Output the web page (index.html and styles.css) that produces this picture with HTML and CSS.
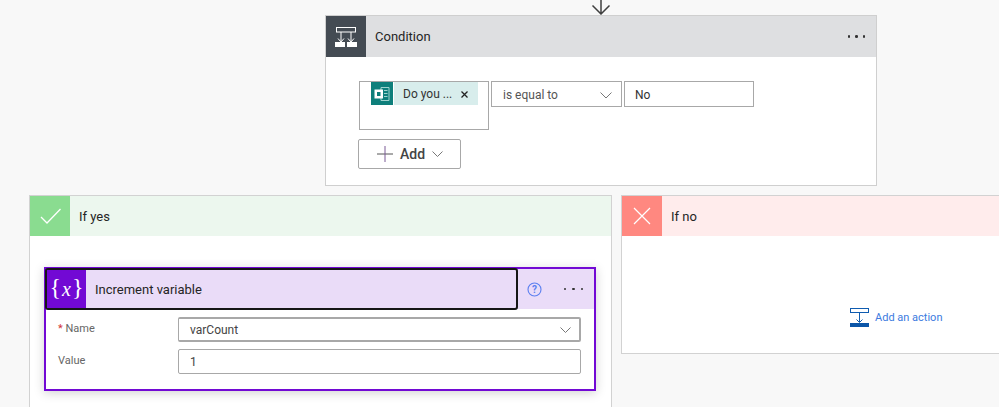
FILE: index.html
```html
<!DOCTYPE html>
<html lang="en">
<head>
<meta charset="utf-8">
<title>Condition</title>
<link rel="stylesheet" href="styles.css">
</head>
<body>
<svg class="flow-arrow" width="20" height="15" viewBox="0 0 20 15"><path d="M10 0V14M1.500 5.500L10 14L18.500 5.500" fill="none" stroke="#3f3f3f" stroke-width="1.500"/></svg>
<section class="condition">
  <header class="head head-grey">
    <div class="tile tile-dark">
      <svg width="22" height="22" viewBox="0 0 22 22"><g fill="none" stroke="#fff" stroke-width="1"><rect x="1.500" y="1.500" width="19" height="4.500"/><path d="M6 6V15M16 6V15"/></g><path d="M0 16h10v5H0zM12 16h10v5H12z" fill="#fff"/><path d="M3 12.500l3 3.500 3-3.500M13 12.500l3 3.500 3-3.500" fill="none" stroke="#fff" stroke-width="1"/></svg>
    </div>
    <span class="title title-condition">Condition</span>
    <span class="dots"><i></i><i></i><i></i></span>
  </header>
  <div class="cond-body">
    <div class="cond-row">
      <div class="token-box">
        <div class="chip">
          <span class="chip-icon">
            <svg width="18" height="18" viewBox="0 0 18 18"><path d="M8 2.500h8v13H8z" fill="none" stroke="#9fd3ce" stroke-width="1"/><path d="M11 5.500h3.500M11 8.500h3.500M11 11.500h3.500" stroke="#9fd3ce" stroke-width="1"/><rect x="1.500" y="4.500" width="8.500" height="9" fill="#fff"/><rect x="4" y="7" width="3.500" height="4" fill="#0e7f7b"/></svg>
          </span>
          <span class="chip-text">Do you ...</span>
          <svg class="chip-x" width="7" height="7" viewBox="0 0 7 7"><path d="M.5.500l6 6M6.500.500l-6 6" stroke="#222" stroke-width="1.300"/></svg>
        </div>
      </div>
      <div class="field field-select"><span>is equal to</span>
        <svg width="12" height="7" viewBox="0 0 12 7"><path d="M.5.500L6 6 11.500.500" fill="none" stroke="#777" stroke-width="1"/></svg>
      </div>
      <div class="field field-value"><span>No</span></div>
    </div>
    <button class="add-btn" type="button">
      <svg width="16" height="16" viewBox="0 0 16 16"><path d="M0 8h16" stroke="#555" stroke-width="1"/><path d="M8 0v16" stroke="#7a5a96" stroke-width="1"/></svg>
      <span>Add</span>
      <svg width="11" height="6" viewBox="0 0 11 6"><path d="M.5.500L5.500 5.500 10.500.500" fill="none" stroke="#777" stroke-width="1"/></svg>
    </button>
  </div>
</section>
<div class="branches">
  <section class="branch branch-yes">
    <header class="head head-yes">
      <div class="tile tile-yes">
        <svg width="22" height="18" viewBox="0 0 22 18"><path d="M2 10L8 16 21.500 2" fill="none" stroke="#fff" stroke-width="1.300"/></svg>
      </div>
      <span class="title title-branch">If yes</span>
    </header>
    <article class="action">
      <header class="action-head">
        <div class="action-focus">
          <div class="tile-var"><span class="brace">{</span><span class="var-x">x</span><span class="brace">}</span></div>
          <span class="title title-action">Increment variable</span>
        </div>
        <div class="action-tools">
          <svg width="15" height="15" viewBox="0 0 15 15"><circle cx="7.500" cy="7.500" r="6.500" fill="none" stroke="#5b7ff0" stroke-width="1.100"/><text x="7.500" y="11" text-anchor="middle" class="help-q">?</text></svg>
          <span class="dots dots-action"><i></i><i></i><i></i></span>
        </div>
      </header>
      <div class="form">
        <div class="form-row">
          <label class="form-label"><span class="req">*</span> Name</label>
          <div class="input input-select"><span>varCount</span>
            <svg width="11" height="6" viewBox="0 0 11 6"><path d="M.5.500L5.500 5.500 10.500.500" fill="none" stroke="#777" stroke-width="1"/></svg>
          </div>
        </div>
        <div class="form-row">
          <label class="form-label">Value</label>
          <div class="input"><span>1</span></div>
        </div>
      </div>
    </article>
  </section>
  <section class="branch branch-no">
    <header class="head head-no">
      <div class="tile tile-no">
        <svg width="18" height="18" viewBox="0 0 18 18"><path d="M1 1l16 16M17 1L1 17" stroke="#fff" stroke-width="1.200"/></svg>
      </div>
      <span class="title title-branch">If no</span>
    </header>
    <div class="no-body">
      <a class="add-action">
        <svg width="19" height="19" viewBox="0 0 19 19"><rect x=".5" y=".5" width="18" height="4" fill="none" stroke="#0f5cb0" stroke-width="1"/><path d="M9.500 4.500V14M6.500 11.500l3 3 3-3" fill="none" stroke="#0f5cb0" stroke-width="1"/><rect y="15" width="19" height="4" fill="#0b56a8"/></svg>
        <span>Add an action</span>
      </a>
    </div>
  </section>
</div>
</body>
</html>
```
FILE: styles.css
```css
* { box-sizing: border-box; }
html, body { margin: 0; height: 407px; overflow: hidden; }
body {
  background: #f8f8f8;
  font-family: Roboto, "Noto Sans", "Liberation Sans", sans-serif;
  font-size: 12px;
  color: #333;
}
.flow-arrow { display: block; margin-left: 591px; }
.condition {
  width: 552px;
  height: 171px;
  margin-left: 325px;
  background: #fff;
  border: 1px solid #cfcfcf;
}
.head { display: flex; align-items: center; height: 41px; }
.head-grey { background: #dedfe1; }
.head-yes { background: #ecf7ee; height: 40px; }
.head-no { background: #ffecec; height: 40px; }
.tile { width: 40px; height: 100%; display: flex; align-items: center; justify-content: center; flex: none; }
.tile-dark { background: #444b53; }
.tile-yes { background: #8adc90; }
.tile-no { background: #ff8880; }
.title { color: #252525; font-size: 13px; }
.title-condition { margin-left: 9px; }
.title-branch { margin-left: 9px; padding-top: 1px; }
.dots { margin-left: auto; margin-right: 11px; display: flex; gap: 5px; }
.dots i { width: 2.500px; height: 2.500px; border-radius: 50%; background: #333; }
.cond-body { padding: 24px 0 0 33px; }
.cond-row { display: flex; align-items: flex-start; }
.token-box {
  width: 130px;
  height: 49px;
  margin-right: 2px;
  padding-left: 11px;
  border: 1px solid #a8a8a8;
  background: #fff;
}
.chip { display: flex; align-items: center; width: 107px; height: 23px; background: #d8edec; }
.chip-icon { width: 23px; height: 23px; background: #0e7f7b; display: flex; align-items: center; justify-content: center; flex: none; border-right: 1px solid #fff; }
.chip-text { margin-left: 9px; padding-top: 1px; font-size: 12px; color: #333; white-space: nowrap; }
.chip-x { margin: 1px 10px 0 auto; }
.field {
  height: 26px;
  border: 1px solid #a8a8a8;
  background: #fff;
  display: flex;
  align-items: center;
  font-size: 12px;
  padding-left: 11px;
}
.field-select { width: 131px; color: #555; justify-content: space-between; padding-top: 2px; padding-right: 9px; margin-right: 2px; }
.field-value { width: 130px; color: #333; padding-left: 10px; padding-top: 1px; }
.add-btn {
  display: flex;
  align-items: center;
  width: 103px;
  height: 30px;
  margin-top: 9px;
  margin-left: -1px;
  padding: 0 0 0 18px;
  background: #fff;
  border: 1px solid #a8a8a8;
  border-radius: 2px;
  font-family: inherit;
  font-size: 14px;
  font-weight: 500;
  color: #444;
}
.add-btn span { margin: 0 7px; }
.branches { display: flex; align-items: flex-start; gap: 9px; margin: 9px 0 0 29px; }
.branch { background: #fff; border: 1px solid #d2d2d2; flex: none; }
.branch-yes { width: 583px; height: 212px; border-bottom: 0; }
.branch-no { width: 378px; height: 159px; border-right: 0; }
.action {
  width: 552px;
  height: 124px;
  margin: 31px 0 0 14px;
  background: #fff;
  border: 2px solid #7209d4;
  box-shadow: 0 2px 10px rgba(0, 0, 0, .18);
}
.action-head { display: flex; height: 40px; background: #eadcf8; }
.action-focus {
  display: flex;
  align-items: center;
  width: 473px;
  height: 42px;
  margin: -1px 0 0 -1px;
  border: 2px solid #161616;
  border-radius: 3px;
  background: #eadcf8;
  flex: none;
}
.tile-var {
  width: 39px;
  height: 100%;
  background: #7209d4;
  color: #fff;
  display: flex;
  align-items: center;
  justify-content: center;
  font-family: "Liberation Serif", serif;
  flex: none;
}
.brace { font-size: 24px; line-height: 1; margin-top: -4px; }
.var-x { font-size: 20px; font-style: italic; margin: 0 1px; line-height: 1; }
.title-action { margin-left: 9px; }
.action-tools { flex: 1; display: flex; align-items: center; padding-left: 9px; }
.help-q { font-family: Roboto, sans-serif; font-size: 10px; font-weight: 700; fill: #5b7ff0; }
.dots-action { margin-right: 11px; gap: 6px; }
.form { padding-top: 8px; }
.form-row { display: flex; align-items: flex-start; height: 32px; }
.form-label { width: 132px; padding: 5px 0 0 12px; color: #666; font-size: 11px; }
.req { color: #d13438; }
.input {
  width: 403px;
  height: 25px;
  border: 1px solid #a8a8a8;
  border-radius: 2px;
  background: #fff;
  display: flex;
  align-items: center;
  padding: 1px 10px 0 11px;
  color: #444;
  font-size: 12px;
}
.input-select { justify-content: space-between; border-width: 2px 2px 2px 1px; padding-right: 8px; }
.no-body { padding: 72px 0 0 228px; }
.add-action { display: flex; align-items: center; gap: 6px; color: #3c7be0; font-size: 11px; }
```
